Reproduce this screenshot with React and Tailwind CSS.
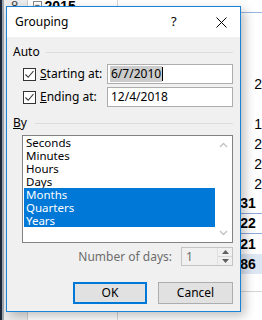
import React from 'react';

const ui = { fontFamily: '"Noto Sans", "Open Sans", sans-serif' };
const sheet = { fontFamily: '"Liberation Sans", Arial, sans-serif' };

const Check = () => (
    <div className="w-[13px] h-[13px] border border-[#333333] bg-white flex items-center justify-center shrink-0">
        <svg width="11" height="11" viewBox="0 0 11 11">
            <polyline points="1.5,5.5 4.2,8.3 9.5,2" fill="none" stroke="#333333" strokeWidth="1.1" />
        </svg>
    </div>
);

const Chevron = ({ down }) => (
    <svg width="9" height="6" viewBox="0 0 9 6">
        <polyline
            points={down ? '1,1 4.5,4.5 8,1' : '1,5 4.5,1.5 8,5'}
            fill="none"
            stroke="#c2c2c2"
            strokeWidth="1.4"
        />
    </svg>
);

const Tri = ({ down }) => (
    <svg width="7" height="4" viewBox="0 0 7 4">
        <polygon points={down ? '0,0 7,0 3.5,4' : '0,4 7,4 3.5,0'} fill="#606060" />
    </svg>
);

const items = ['Seconds', 'Minutes', 'Hours', 'Days', 'Months', 'Quarters', 'Years'];
const selected = ['Months', 'Quarters', 'Years'];

const rows = [
    { t: '2', b: false },
    { t: '', b: false },
    { t: '1', b: false },
    { t: '2', b: false },
    { t: '2', b: false },
    { t: '2', b: false },
    { t: '31', b: true, line: true },
    { t: '22', b: true, line: true },
    { t: '21', b: true },
    { t: '86', b: true, total: true },
];

const Background = () => (
    <div className="flex h-full" style={sheet}>
        <div className="flex w-[28px] border-r border-[#d0d0d0]">
            <div className="w-[2px] bg-[#1c2838]" />
            <div className="w-[2px] bg-[#9ea6b0]" />
            <div className="flex-1 bg-[#ececec] pl-[7px] text-[13px] leading-[12px] text-[#444]">8</div>
        </div>
        <div className="w-[92px] border-r border-[#d8d8d8] flex items-start pl-[5px] gap-[3px]">
            <div className="w-[9px] h-[9px] border border-[#888] bg-white text-[9px] leading-[6px] text-center mt-[1px]">−</div>
            <div className="text-[14px] leading-[12px] font-bold text-black">2015</div>
        </div>
        <div className="flex-1 flex flex-col">
            <div className="h-[13px] border-b border-[#9bb7e0]" />
            <div className="h-[61px]" />
            {rows.map((r, i) => (
                <div
                    key={i}
                    className={`h-[20px] flex items-center text-[14px] text-black ${r.b ? 'font-bold pl-[122px]' : 'pl-[136px]'} ${r.line ? 'border-b border-[#8eaadb]' : ''} ${r.total ? 'bg-[#dde7f3]' : ''}`}
                >
                    {r.t}
                </div>
            ))}
            <div className="h-[18px] border-b border-[#d6d6d6]" />
        </div>
    </div>
);

const Dialog = () => (
    <div
        className="absolute left-[6px] top-[6px] w-[235px] h-[306px] border border-[#1883d7] bg-[#f0f0f0] flex flex-col shadow-[4px_4px_10px_rgba(0,0,0,0.25)] text-[12px] text-black"
        style={ui}
    >
        <div className="h-[30px] bg-white flex items-center pl-[8px] shrink-0">
            <span className="flex-1">Grouping</span>
            <span className="w-[10px] text-[13px] mr-[35px]">?</span>
            <svg width="11" height="11" viewBox="0 0 11 11" className="mr-[13px]">
                <line x1="0.5" y1="0.5" x2="10.5" y2="10.5" stroke="#000" strokeWidth="1" />
                <line x1="10.5" y1="0.5" x2="0.5" y2="10.5" stroke="#000" strokeWidth="1" />
            </svg>
        </div>

        <div className="flex flex-col pl-[6px] pr-[7px]">
            <div className="mt-[8px] h-[14px] flex items-center leading-[14px]">
                <span>Auto</span>
                <div className="flex-1 ml-[6px] h-px bg-[#dcdcdc]" />
            </div>

            <div className="mt-[5px] h-[20px] flex items-center">
                <div className="ml-[10px]"><Check /></div>
                <span className="ml-[4px] flex-1"><u>S</u>tarting at:</span>
                <div className="w-[126px] h-[20px] border border-[#adadad] bg-white flex items-center pl-[2px]">
                    <span className="bg-[#cccccc] px-px leading-[16px]">6/7/2010</span>
                    <div className="w-px h-[14px] bg-black" />
                </div>
            </div>

            <div className="mt-[3px] h-[20px] flex items-center">
                <div className="ml-[10px]"><Check /></div>
                <span className="ml-[4px] flex-1"><u>E</u>nding at:</span>
                <div className="w-[126px] h-[20px] border border-[#adadad] bg-white flex items-center pl-[3px]">
                    12/4/2018
                </div>
            </div>

            <div className="mt-[9px] h-[14px] flex items-center leading-[14px]">
                <span><u>B</u>y</span>
                <div className="flex-1 ml-[8px] h-px bg-[#dcdcdc]" />
            </div>

            <div className="mt-[5px] ml-[9px] h-[108px] border border-[#828282] bg-white flex">
                <div className="flex-1 flex flex-col pl-px">
                    {items.map((it) => (
                        <div
                            key={it}
                            className={`h-[13px] leading-[13px] text-[11.5px] pl-[2px] overflow-hidden ${selected.includes(it) ? 'bg-[#0078d7] text-white' : ''}`}
                        >
                            {it}
                        </div>
                    ))}
                </div>
                <div className="w-[17px] flex flex-col items-center justify-between py-[6px]">
                    <Chevron />
                    <Chevron down />
                </div>
            </div>

            <div className="mt-[4px] h-[19px] flex items-center justify-end">
                <span className="text-[#6d6d6d] mr-[9px]">Number of days:</span>
                <div className="w-[52px] h-[19px] border border-[#c4c4c4] flex">
                    <div className="flex-1 bg-[#f0f0f0] pl-[4px] text-[#6d6d6d] leading-[17px]">1</div>
                    <div className="w-[15px] flex flex-col border-l border-[#e0e0e0]">
                        <div className="flex-1 flex items-center justify-center border-b border-[#d8d8d8]"><Tri /></div>
                        <div className="flex-1 flex items-center justify-center"><Tri down /></div>
                    </div>
                </div>
            </div>

            <div className="mt-[16px] flex justify-end gap-[11px]">
                <button className="w-[74px] h-[22px] border-2 border-[#0078d7] bg-[#e1e1e1] text-[12px]">OK</button>
                <button className="w-[75px] h-[22px] border border-[#adadad] bg-[#e1e1e1] text-[12px]">Cancel</button>
            </div>
        </div>
    </div>
);

export default function App() {
    return (
        <div className="relative w-[262px] h-[320px] bg-white overflow-hidden">
            <Background />
            <Dialog />
        </div>
    );
}
